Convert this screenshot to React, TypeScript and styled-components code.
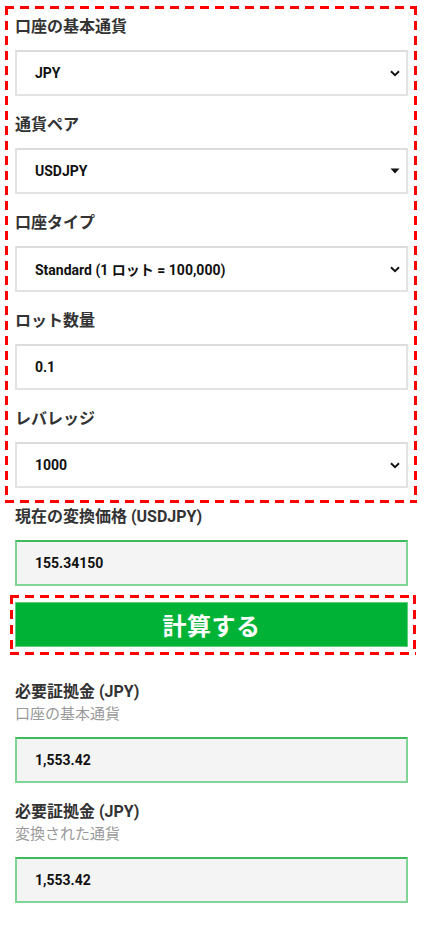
import React from 'react'
import styled, { createGlobalStyle } from 'styled-components'

const GlobalStyle = createGlobalStyle`
  html, body {
    margin: 0;
    padding: 0;
    background: #ffffff;
  }
  body {
    font-family: Roboto, "Noto Sans CJK JP", sans-serif;
    color: #333333;
  }
`

const Page = styled.div`
  width: 424px;
  box-sizing: border-box;
  padding: 6px 16px 30px 15px;
`

// dashed outline drawn with gradients so the dashes come out long like the original
const Highlight = styled.div<{ $left: number; $right: number }>`
  border: 3px solid transparent;
  margin-left: -${({ $left }) => $left}px;
  margin-right: -${({ $right }) => $right}px;
  background:
    linear-gradient(90deg, #ff0000 9px, transparent 9px) top left / 15px 3px repeat-x border-box,
    linear-gradient(90deg, #ff0000 9px, transparent 9px) bottom left / 15px 3px repeat-x border-box,
    linear-gradient(180deg, #ff0000 9px, transparent 9px) top left / 3px 15px repeat-y border-box,
    linear-gradient(180deg, #ff0000 9px, transparent 9px) top right / 3px 15px repeat-y border-box;
`

const FormArea = styled(Highlight)`
  padding: 6px 6px 12px 7px;
  display: flex;
  flex-direction: column;
  gap: 17px;
`

const ButtonArea = styled(Highlight)`
  margin-top: 9px;
  padding: 4px 5px 5px 2px;
`

const Group = styled.div`
  display: flex;
  flex-direction: column;
`

const Label = styled.div`
  font-size: 16px;
  line-height: 24px;
  font-weight: 700;
  color: #333333;
  margin-bottom: 11px;
`

const ResultLabel = styled(Label)`
  margin-bottom: 0;
`

const SubLabel = styled.div`
  font-size: 15px;
  line-height: 20px;
  color: #9a9a9a;
  margin-bottom: 13px;
`

const Box = styled.div<{ $readonly?: boolean }>`
  height: 46px;
  box-sizing: border-box;
  display: flex;
  align-items: center;
  justify-content: space-between;
  padding: 0 6px 0 18px;
  font-size: 14px;
  font-weight: 700;
  color: #111111;
  background: ${({ $readonly }) => ($readonly ? '#f4f4f4' : '#ffffff')};
  border: 2px solid ${({ $readonly }) => ($readonly ? '#80d496' : '#e3e3e3')};
  border-top-color: ${({ $readonly }) => ($readonly ? '#3cba5c' : '#dcdcdc')};
`

const StaticBlock = styled(Group)`
  margin-top: 2px;
`

const CalcButton = styled.button`
  display: block;
  width: 100%;
  height: 45px;
  border: 1px solid #5fcf7f;
  background: #00b336;
  color: #ffffff;
  font-family: Roboto, "Noto Sans CJK JP", sans-serif;
  font-size: 24px;
  font-weight: 700;
  letter-spacing: 0.5px;
  padding: 0;
  cursor: pointer;
`

const Results = styled.div`
  margin-top: 25px;
  display: flex;
  flex-direction: column;
  gap: 17px;
`

const Chevron = () => (
  <svg width="10" height="7" viewBox="0 0 10 7">
    <path d="M1 1.3 L5 5.2 L9 1.3" fill="none" stroke="#111" strokeWidth="1.9" />
  </svg>
)

const Caret = () => (
  <svg width="10" height="6" viewBox="0 0 10 6">
    <path d="M0.5 0.5 H9.5 L5 5.5 Z" fill="#111" />
  </svg>
)

const selects = [
  { label: '口座の基本通貨', value: 'JPY', icon: 'chevron' },
  { label: '通貨ペア', value: 'USDJPY', icon: 'caret' },
  { label: '口座タイプ', value: 'Standard (1 ロット = 100,000)', icon: 'chevron' },
  { label: 'ロット数量', value: '0.1', icon: '' },
  { label: 'レバレッジ', value: '1000', icon: 'chevron' },
]

const results = [
  { label: '必要証拠金 (JPY)', sub: '口座の基本通貨', value: '1,553.42' },
  { label: '必要証拠金 (JPY)', sub: '変換された通貨', value: '1,553.42' },
]

export default function App() {
  return (
    <Page>
      <GlobalStyle />
      <FormArea $left={10} $right={9}>
        {selects.map((s) => (
          <Group key={s.label}>
            <Label>{s.label}</Label>
            <Box>
              <span>{s.value}</span>
              {s.icon === 'chevron' && <Chevron />}
              {s.icon === 'caret' && <Caret />}
            </Box>
          </Group>
        ))}
      </FormArea>

      <StaticBlock>
        <Label>現在の変換価格 (USDJPY)</Label>
        <Box $readonly>
          <span>155.34150</span>
        </Box>
      </StaticBlock>

      <ButtonArea $left={5} $right={8}>
        <CalcButton>計算する</CalcButton>
      </ButtonArea>

      <Results>
        {results.map((r) => (
          <Group key={r.sub}>
            <ResultLabel>{r.label}</ResultLabel>
            <SubLabel>{r.sub}</SubLabel>
            <Box $readonly>
              <span>{r.value}</span>
            </Box>
          </Group>
        ))}
      </Results>
    </Page>
  )
}
